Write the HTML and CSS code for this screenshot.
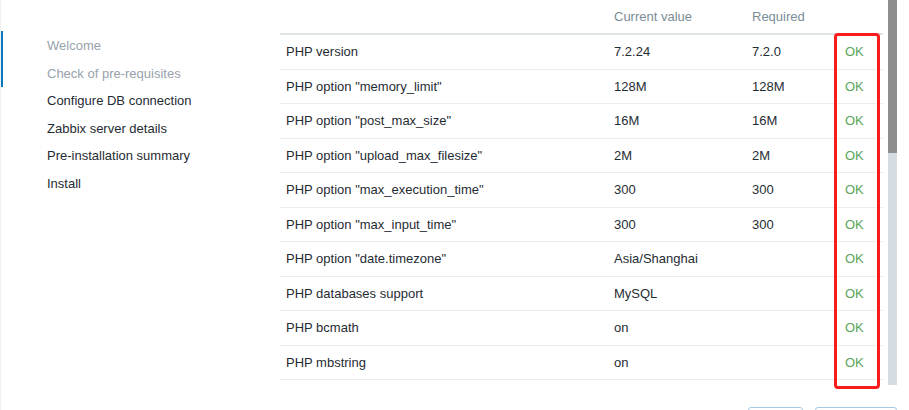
FILE: index.html
```html
<!DOCTYPE html>
<html>
<head>
<meta charset="utf-8">
<link rel="stylesheet" href="styles.css">
</head>
<body>
<div class="page">
  <aside class="sidebar">
    <div class="done">
      <div class="step muted">Welcome</div>
      <div class="step muted">Check of pre-requisites</div>
    </div>
    <div class="step">Configure DB connection</div>
    <div class="step">Zabbix server details</div>
    <div class="step">Pre-installation summary</div>
    <div class="step">Install</div>
  </aside>
  <main class="main">
    <div class="table-area">
      <table class="req">
        <thead>
          <tr><th class="c-name"></th><th class="c-cur">Current value</th><th class="c-req">Required</th><th class="c-ok"></th></tr>
        </thead>
        <tbody>
          <tr><td>PHP version</td><td>7.2.24</td><td>7.2.0</td><td class="ok">OK</td></tr>
          <tr><td>PHP option "memory_limit"</td><td>128M</td><td>128M</td><td class="ok">OK</td></tr>
          <tr><td>PHP option "post_max_size"</td><td>16M</td><td>16M</td><td class="ok">OK</td></tr>
          <tr><td>PHP option "upload_max_filesize"</td><td>2M</td><td>2M</td><td class="ok">OK</td></tr>
          <tr><td>PHP option "max_execution_time"</td><td>300</td><td>300</td><td class="ok">OK</td></tr>
          <tr><td>PHP option "max_input_time"</td><td>300</td><td>300</td><td class="ok">OK</td></tr>
          <tr><td>PHP option "date.timezone"</td><td>Asia/Shanghai</td><td></td><td class="ok">OK</td></tr>
          <tr><td>PHP databases support</td><td>MySQL</td><td></td><td class="ok">OK</td></tr>
          <tr><td>PHP bcmath</td><td>on</td><td></td><td class="ok">OK</td></tr>
          <tr><td>PHP mbstring</td><td>on</td><td></td><td class="ok">OK</td></tr>
        </tbody>
      </table>
      <div class="highlight"></div>
    </div>
    <div class="scrollbar"><div class="thumb"></div></div>
    <div class="buttons">
      <button class="btn btn-back" aria-label="Back"></button>
      <button class="btn btn-next" aria-label="Next step"></button>
    </div>
  </main>
</div>
</body>
</html>
```
FILE: styles.css
```css
html, body {
  margin: 0;
  padding: 0;
  background: #ffffff;
  font-family: "Liberation Sans", Arial, sans-serif;
  font-size: 13px;
  color: #1f2c33;
}
.page {
  display: flex;
  height: 410px;
  overflow: hidden;
  border-left: 1px solid #eef0f2;
  box-sizing: border-box;
}
.sidebar {
  width: 279px;
  flex: none;
  padding-top: 32px;
}
.done {
  border-left: 3px solid #0a7ac0;
  margin-left: -1px;
  margin-top: -1px;
  padding-top: 1px;
}
.step {
  height: 27.5px;
  line-height: 27.5px;
  padding-left: 46px;
}
.done .step {
  padding-left: 44px;
}
.muted {
  color: #97a2ab;
}
.main {
  position: relative;
  flex: 1;
  display: grid;
  grid-template-columns: 603px 9px;
  column-gap: 5px;
  align-items: start;
}
.table-area {
  position: relative;
}
.req {
  width: 603px;
  border-collapse: collapse;
  table-layout: fixed;
}
.req th {
  height: 34px;
  padding: 0 6px;
  text-align: left;
  font-weight: normal;
  color: #7a8c96;
  border-bottom: 2px solid #dfe4e7;
  vertical-align: middle;
  box-sizing: border-box;
}
.c-name { width: 328px; }
.c-cur { width: 138px; }
.c-req { width: 92px; }
.c-ok { width: 45px; }
.req td {
  height: 33.5px;
  padding: 0 6px;
  border-bottom: 1px solid #ebeef0;
  vertical-align: middle;
  white-space: nowrap;
}
.req td.ok {
  color: #5aa55a;
  padding-left: 7px;
}
.highlight {
  position: absolute;
  left: 554px;
  top: 33px;
  width: 46px;
  height: 356px;
  border: 3px solid #fa1c1c;
  border-radius: 4px;
  box-sizing: border-box;
}
.scrollbar {
  width: 9px;
  height: 385px;
  background: #d5dde2;
}
.thumb {
  height: 153px;
  background: #8e8e8e;
}
.buttons {
  position: absolute;
  top: 407px;
  right: 12px;
  display: flex;
  gap: 12px;
}
.btn {
  height: 24px;
  border: 1px solid #a6c9e3;
  border-radius: 3px;
  background: #ffffff;
}
.btn-back { width: 55px; }
.btn-next { width: 82px; }
```
